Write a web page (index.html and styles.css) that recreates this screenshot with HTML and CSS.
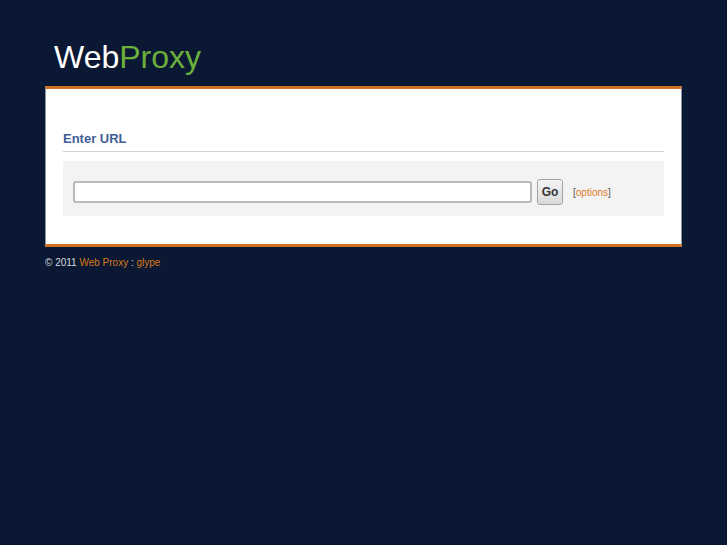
FILE: index.html
```html
<!DOCTYPE html>
<html>
<head>
<meta charset="utf-8">
<link rel="stylesheet" href="styles.css">
</head>
<body>
<div class="wrap">
  <div class="logo"><span class="web">Web</span><span class="proxy">Proxy</span></div>
  <div class="panel">
    <h2 class="title">Enter URL</h2>
    <div class="form-box">
      <input type="text" class="url">
      <button class="go">Go</button>
      <span class="opts">[<a href="#">options</a>]</span>
    </div>
  </div>
  <div class="footer">© 2011 <a href="#">Web Proxy</a> : <a href="#">glype</a></div>
</div>
</body>
</html>
```
FILE: styles.css
```css
html, body {
  margin: 0;
  padding: 0;
  background: #0b1833;
  font-family: "Liberation Sans", Arial, sans-serif;
}
.wrap {
  width: 637px;
  margin-left: 45px;
  padding-top: 37px;
}
.logo {
  font-size: 32px;
  line-height: 40px;
  padding-left: 9px;
  height: 49px;
}
.web { color: #ffffff; }
.proxy { color: #6bb03b; }
.panel {
  background: #fff;
  border-top: 3px solid #d2701f;
  border-bottom: 3px solid #d2701f;
  border-left: 1px solid #8a93a4;
  border-right: 1px solid #8a93a4;
  padding: 42px 17px 28px 17px;
}
.title {
  margin: 0;
  font-size: 13px;
  font-weight: bold;
  color: #3f5e96;
  line-height: 16px;
  padding-bottom: 4px;
  border-bottom: 1px solid #d2d2d2;
}
.form-box {
  margin-top: 9px;
  background: #f3f3f3;
  height: 55px;
  box-sizing: border-box;
  padding-top: 7px;
  display: flex;
  align-items: center;
  padding-left: 10px;
}
.url {
  width: 459px;
  height: 22px;
  box-sizing: border-box;
  border: 2px solid #b9b9b9;
  border-radius: 3px;
  background: #fff;
  margin: 0 5px 0 0;
  padding: 0;
  outline: none;
}
.go {
  width: 26px;
  height: 26px;
  padding: 0;
  margin: 0;
  border: 1px solid #a3a3a3;
  border-radius: 3px;
  background: linear-gradient(#f4f4f4, #d9d9d9);
  font-family: "Liberation Sans", Arial, sans-serif;
  font-size: 12px;
  font-weight: bold;
  color: #333;
}
.opts {
  margin-left: 10px;
  font-size: 10px;
  color: #555;
}
.opts a { color: #e07b1e; text-decoration: none; }
.footer {
  margin-top: 10px;
  font-size: 10px;
  color: #d6d9df;
}
.footer a { color: #d9791d; text-decoration: none; }
```
